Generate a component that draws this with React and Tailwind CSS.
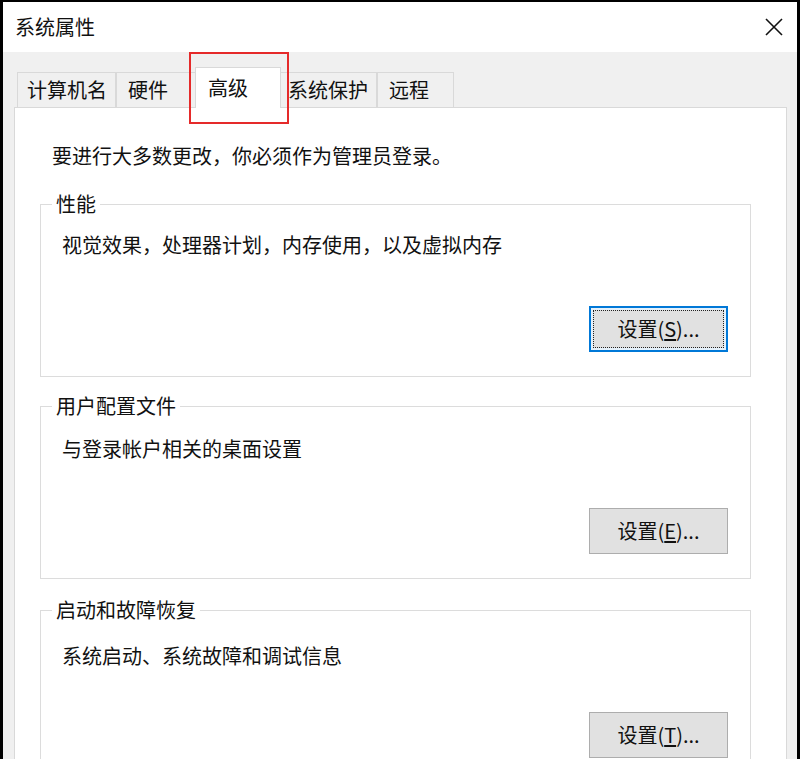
import React from 'react';

const font = { fontFamily: '"Noto Sans CJK SC", "Noto Sans", sans-serif' };

const tabs = [
  { label: '计算机名', w: 'w-[99px]', pl: 'pl-[9px]' },
  { label: '硬件', w: 'w-[80px]', pl: 'pl-[11px]' },
  { label: '高级', w: 'w-[86px]', pl: 'pl-[12px]', active: true },
  { label: '系统保护', w: 'w-[97px]', pl: 'pl-[7px]' },
  { label: '远程', w: 'w-[77px]', pl: 'pl-[11px]' },
];

const SettingsButton = ({ hotkey, focused }) => (
  <button
    type="button"
    className={
      focused
        ? 'w-[139px] h-[46px] bg-[#e5f1fb] border-2 border-[#0078d7] p-[2px] text-[20px] text-[#111]'
        : 'w-[139px] h-[46px] bg-[#e1e1e1] border border-[#adadad] text-[20px] text-[#111]'
    }
  >
    <span
      className={
        focused
          ? 'flex items-center justify-center w-full h-full bg-[#e1e1e1] border border-dotted border-[#222]'
          : 'flex items-center justify-center w-full h-full'
      }
    >
      设置(<span className="underline underline-offset-2">{hotkey}</span>)...
    </span>
  </button>
);

const GroupBox = ({ title, desc, hotkey, focused, descTop, btnTop, top }) => (
  <fieldset className={`${top} ml-[25px] mr-[35px] border border-[#dcdcdc] pl-[21px] pr-[22px] pb-[24px]`}>
    <legend className="-ml-[10px] px-[4px] text-[20px] leading-[24px] text-[#111]">{title}</legend>
    <p className={`${descTop} text-[20px] leading-[28px] text-[#111]`}>{desc}</p>
    <div className={`${btnTop} flex justify-end`}>
      <SettingsButton hotkey={hotkey} focused={focused} />
    </div>
  </fieldset>
);

export default function App() {
  return (
    <div
      style={font}
      className="relative w-[800px] h-[759px] overflow-hidden bg-[#f0f0f0] border-l-[3px] border-r-[3px] border-t-2 border-black"
    >
      {/* title bar */}
      <div className="h-[50px] bg-white flex items-center justify-between pl-[12px] pr-[12px]">
        <span className="text-[20px] text-[#111]">系统属性</span>
        <svg width="20" height="20" viewBox="0 0 20 20" className="mr-[1px]">
          <path d="M2 2 L18 18 M18 2 L2 18" stroke="#111" strokeWidth="1.6" fill="none" />
        </svg>
      </div>

      {/* tabs */}
      <div className="flex items-end pl-[14px] pt-[15px] h-[55px]">
        {tabs.map((t) =>
          t.active ? (
            <div
              key={t.label}
              className={`${t.w} ${t.pl} relative z-10 -mb-px -ml-[1px] -mr-[1px] h-[41px] bg-white border border-b-0 border-[#d9d9d9] pt-[6px] text-[20px] leading-[28px] text-[#111]`}
            >
              {t.label}
            </div>
          ) : (
            <div
              key={t.label}
              className={`${t.w} ${t.pl} h-[35px] bg-[#f0f0f0] border border-b-0 border-[#d9d9d9] pt-[3px] text-[20px] leading-[28px] text-[#111]`}
            >
              {t.label}
            </div>
          )
        )}
      </div>

      {/* panel */}
      <div className="ml-[11px] mr-[10px] h-[660px] bg-white border border-[#d9d9d9] pt-[34px]">
        <p className="pl-[37px] text-[20px] leading-[28px] text-[#111]">
          要进行大多数更改，你必须作为管理员登录。
        </p>

        <GroupBox
          top="mt-[22px]"
          title="性能"
          desc="视觉效果，处理器计划，内存使用，以及虚拟内存"
          hotkey="S"
          focused
          descTop="mt-[15px]"
          btnTop="mt-[47px]"
        />
        <GroupBox
          top="mt-[17px]"
          title="用户配置文件"
          desc="与登录帐户相关的桌面设置"
          hotkey="E"
          descTop="mt-[17px]"
          btnTop="mt-[45px]"
        />
        <GroupBox
          top="mt-[19px]"
          title="启动和故障恢复"
          desc="系统启动、系统故障和调试信息"
          hotkey="T"
          descTop="mt-[20px]"
          btnTop="mt-[42px]"
        />
      </div>

      {/* highlight around the selected tab */}
      <div className="absolute left-[186px] top-[50px] w-[100px] h-[72px] border-2 border-[#e52a2a] z-20" />
    </div>
  );
}
